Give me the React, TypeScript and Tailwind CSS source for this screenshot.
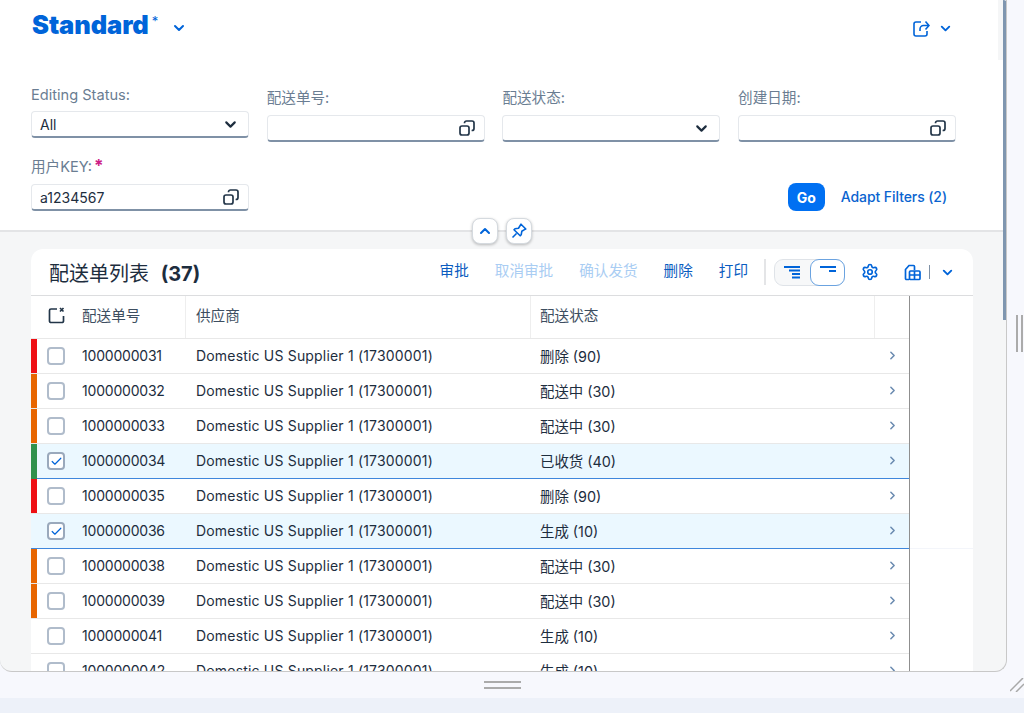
import { ChevronDown, ChevronRight, ChevronUp, Settings, Check } from "lucide-react";

const FONT = "font-['Inter','Noto_Sans_CJK_SC',sans-serif]";

type Row = {
  id: string;
  status: string;
  strip?: string;
  selected?: boolean;
};

const rows: Row[] = [
  { id: "1000000031", status: "删除 (90)", strip: "bg-[#ee0f14]" },
  { id: "1000000032", status: "配送中 (30)", strip: "bg-[#e76500]" },
  { id: "1000000033", status: "配送中 (30)", strip: "bg-[#e76500]" },
  { id: "1000000034", status: "已收货 (40)", strip: "bg-[#30914c]", selected: true },
  { id: "1000000035", status: "删除 (90)", strip: "bg-[#ee0f14]" },
  { id: "1000000036", status: "生成 (10)", selected: true },
  { id: "1000000038", status: "配送中 (30)", strip: "bg-[#e76500]" },
  { id: "1000000039", status: "配送中 (30)", strip: "bg-[#e76500]" },
  { id: "1000000041", status: "生成 (10)" },
  { id: "1000000042", status: "生成 (10)" },
];

function ValueHelpIcon() {
  return (
    <svg width="16" height="16" viewBox="0 0 16 16" fill="none" stroke="#223548" strokeWidth="1.7" className="shrink-0">
      <rect x="1" y="6" width="9" height="9" rx="2" />
      <path d="M5.5 3.2V3a2 2 0 0 1 2-2H13a2 2 0 0 1 2 2v5.500a2 2 0 0 1-2 2h-.4" />
    </svg>
  );
}

function Field({ value, select }: { value?: string; select?: boolean }) {
  return (
    <div className="flex h-[27px] w-[218px] items-center justify-between rounded-[4px] border border-[#e5e8ec] border-b-2 border-b-[#7f91a6] bg-white pl-2 pr-[9px] text-[14px] text-[#1d2d3e]">
      <span>{value}</span>
      {select ? <ChevronDown size={17} strokeWidth={3} color="#1d2d3e" /> : <ValueHelpIcon />}
    </div>
  );
}

function Label({ text, required }: { text: string; required?: boolean }) {
  return (
    <div className="flex h-[19px] items-start text-[14.6px] leading-[19px] text-[#6a7d92]">
      {text}:
      {required && <span className="ml-[2px] text-[17px] font-bold leading-[17px] text-[#cc1d86]">*</span>}
    </div>
  );
}

function ToolbarButton({ text, disabled }: { text: string; disabled?: boolean }) {
  return <span className={disabled ? "text-[14.6px] text-[#a9cdf3]" : "text-[14.6px] text-[#0a5cc0]"}>{text}</span>;
}

function SortIcon({ short }: { short?: boolean }) {
  return (
    <svg width="18" height="14" viewBox="0 0 18 14" fill="#0064d9">
      {short ? (
        <>
          <rect x="1" y="1" width="16" height="2" />
          <rect x="10" y="5" width="7" height="2" />
        </>
      ) : (
        <>
          <rect x="1" y="1" width="16" height="2" />
          <rect x="6" y="4.500" width="11" height="2" />
          <rect x="9" y="8" width="8" height="2" />
          <rect x="9" y="11.500" width="8" height="2" />
        </>
      )}
    </svg>
  );
}

function Checkbox({ checked }: { checked?: boolean }) {
  return (
    <div className={`flex h-[18px] w-[18px] items-center justify-center rounded-[4px] border-2 bg-white ${checked ? "border-[#9aa9bc]" : "border-[#b0bccb]"}`}>
      {checked && <Check size={13} strokeWidth={2.2} color="#0064d9" />}
    </div>
  );
}

function TableRow({ row }: { row: Row }) {
  return (
    <div
      className={`flex h-[35px] shrink-0 items-stretch border-b ${row.selected ? "border-b-[#3f87dc] bg-[#ebf8ff]" : "border-b-[#e8e8e8] bg-white"}`}
    >
      <div className={`w-[6px] shrink-0 ${row.strip ?? ""} ${row.selected ? "-mb-px" : ""}`} />
      <div className="flex w-[36px] shrink-0 items-center justify-center pl-[2px]">
        <Checkbox checked={row.selected} />
      </div>
      <div className="flex w-[113px] shrink-0 items-center pb-[1px] pl-[9px] tracking-[-0.2px]">{row.id}</div>
      <div className="flex w-[345px] shrink-0 items-center pb-[1px] pl-[10px] tracking-[0.18px]">Domestic US Supplier 1 (17300001)</div>
      <div className="flex w-[344px] shrink-0 items-center pl-[9px] pt-[2px] text-[14.4px]">{row.status}</div>
      <div className="flex flex-1 items-center justify-center pb-[1px]">
        <ChevronRight size={13} strokeWidth={2.8} color="#6b8bb0" />
      </div>
    </div>
  );
}

export default function App() {
  return (
    <div className={`flex h-[713px] w-[1024px] flex-col overflow-hidden bg-[#f7f8fd] ${FONT}`}>
      <div className="relative flex h-[672px] shrink-0">
        {/* main panel */}
        <div className="relative flex w-[1007px] flex-col overflow-hidden rounded-b-[12px] border-b border-r border-[#c8c8c8] bg-[#f5f6f7]">
          {/* filter bar */}
          <div className="relative h-[232px] shrink-0 border-b-2 border-[#e3e4e6] bg-white pl-[31px]">
            <div className="flex h-[50px] items-center pr-[53px]">
              <span className="ml-px pt-[1px] text-[25.5px] font-black tracking-[-0.1px] text-[#0064d9]">Standard</span>
              <span className="mb-[7px] ml-[3px] text-[13px] text-[#0064d9]">*</span>
              <ChevronDown size={16} strokeWidth={3} color="#0064d9" className="ml-[13px] mt-[6px]" />
              <div className="ml-auto flex items-center gap-[8px] pt-[6px]">
                <svg width="17" height="17" viewBox="0 0 17 17" fill="none" stroke="#0064d9" strokeWidth="1.600">
                  <path d="M8 2H3a2 2 0 0 0-2 2v10a2 2 0 0 0 2 2h9a2 2 0 0 0 2-2v-3" />
                  <path d="M7 11V9a3.500 3.500 0 0 1 3.500-3.500H16M12.500 1.500 16 5.500l-3.500 4" />
                </svg>
                <ChevronDown size={15} strokeWidth={3} color="#0064d9" />
              </div>
            </div>

            <div className="mt-[36px] flex gap-[17.7px]">
              <div>
                <Label text="Editing Status" required={false} />
                <div className="mt-[6px]">
                  <Field value="All" select />
                </div>
              </div>
              <div className="pt-[3px]">
                <Label text="配送单号" />
                <div className="mt-[7px]">
                  <Field />
                </div>
              </div>
              <div className="pt-[3px]">
                <Label text="配送状态" />
                <div className="mt-[7px]">
                  <Field select />
                </div>
              </div>
              <div className="pt-[3px]">
                <Label text="创建日期" />
                <div className="mt-[7px]">
                  <Field />
                </div>
              </div>
            </div>

            <div className="mt-[16px] flex items-end pr-[59px]">
              <div>
                <Label text="用户KEY" required />
                <div className="mt-[7px]">
                  <Field value="a1234567" />
                </div>
              </div>
              <button className="ml-auto flex h-[28px] w-[37px] items-center justify-center rounded-[8px] bg-[#0070f2] text-[14px] font-bold text-white">
                Go
              </button>
              <span className="mb-[4px] ml-[16px] text-[14px] font-medium leading-[20px] tracking-[-0.08px] text-[#0a64d0]">Adapt Filters (2)</span>
            </div>

            {/* top of the scrollbar track */}
            <div className="absolute right-0 top-0 h-[60px] w-[8px] bg-[#f5f6f7]" />
            <div className="absolute bottom-[-14px] left-[472px] z-10 flex gap-[8px]">
              <div className="flex h-[26px] w-[26px] items-center justify-center rounded-[8px] border border-[#d5dadf] bg-white shadow-[0_1px_3px_rgba(0,0,0,0.25)]">
                <ChevronUp size={16} strokeWidth={3} color="#0064d9" />
              </div>
              <div className="flex h-[26px] w-[26px] items-center justify-center rounded-[8px] border border-[#d5dadf] bg-white shadow-[0_1px_3px_rgba(0,0,0,0.25)]">
                <svg width="16" height="16" viewBox="0 0 16 16" fill="none" stroke="#0064d9" strokeWidth="1.600" strokeLinejoin="round">
                  <path d="M10 1.200 14.800 6l-1.300.6-2.700 1.700-.6 3.500-1 1L3 6.800l1-1 3.500-.6 1.700-2.700zM5.500 10.500 1.500 14.500" />
                </svg>
              </div>
            </div>
          </div>

          {/* table card */}
          <div className="flex min-h-0 flex-1 pl-[31px] pr-[33px] pt-[17px]">
            <div className="flex min-h-0 w-[942px] flex-col overflow-hidden rounded-t-[12px] bg-white">
              <div className="flex h-[47px] shrink-0 items-center border-b border-[#dcdddf] pl-[18px]">
                <span className="pt-[3px] text-[20px] text-[#1d2d3e]">
                  配送单列表 <span className="ml-[6px] font-bold">(37)</span>
                </span>
                <div className="ml-auto flex items-center">
                  <div className="flex items-center gap-[26px] pb-[1px] pl-[1px]">
                    <ToolbarButton text="审批" />
                    <ToolbarButton text="取消审批" disabled />
                    <ToolbarButton text="确认发货" disabled />
                    <ToolbarButton text="删除" />
                    <ToolbarButton text="打印" />
                  </div>
                  <div className="ml-[16px] h-[26px] w-[2px] bg-[#e4e5e7]" />
                  <div className="ml-[8px] flex h-[27px] w-[71px] rounded-[9px] border border-[#dfe3e8] bg-[#f7f8f9]">
                    <div className="flex w-[35px] items-center justify-center pr-[2px]">
                      <SortIcon />
                    </div>
                    <div className="-my-px -mr-px flex h-[27px] w-[35px] items-start justify-center rounded-[9px] border border-[#6ba3e0] bg-white pt-[5px]">
                      <SortIcon short />
                    </div>
                  </div>
                  <Settings size={18} strokeWidth={2.2} color="#0064d9" className="ml-[16px]" />
                  <svg width="17" height="17" viewBox="0 0 17 17" fill="none" stroke="#0064d9" strokeWidth="1.700" className="ml-[25px]">
                    <path d="M5 15.500H2.500a1 1 0 0 1-1-1V5.500L5 1.500h4.500a1 1 0 0 1 1 1V6" />
                    <rect x="5.500" y="7" width="10.500" height="8.500" rx="1" />
                    <path d="M5.500 11h10.500M10.500 7v8.500" />
                  </svg>
                  <div className="ml-[8px] h-[14px] w-px bg-[#7f91a6]" />
                  <ChevronDown size={15} strokeWidth={3} color="#0064d9" className="ml-[10px] mr-[18px]" />
                </div>
              </div>

              <div className="flex min-h-0 flex-1 items-start">
                <div className="flex h-full w-[879px] shrink-0 flex-col overflow-hidden border-r border-[#8f8f8f] text-[14px] text-[#1d2d3e]">
                  <div className="flex h-[43px] shrink-0 items-stretch border-b border-[#e8e8e8]">
                    <div className="flex w-[42px] shrink-0 items-center justify-center pb-[3px] pl-[8px]">
                      <svg width="17" height="17" viewBox="0 0 17 17" fill="none" stroke="#223548" strokeWidth="1.700">
                        <path d="M9 2H3a1.500 1.500 0 0 0-1.500 1.500V14A1.500 1.500 0 0 0 3 15.500h11a1.500 1.500 0 0 0 1.500-1.500V9" />
                        <path d="M12 1l3.500 3.500M15.500 1 12 4.500" />
                      </svg>
                    </div>
                    <div className="flex w-[113px] shrink-0 items-center border-r border-[#eeeeee] pl-[9px] text-[14.6px] text-[#3d4e60]">配送单号</div>
                    <div className="flex w-[345px] shrink-0 items-center border-r border-[#eeeeee] pl-[10px] text-[14.6px] text-[#3d4e60]">供应商</div>
                    <div className="flex w-[344px] shrink-0 items-center border-r border-[#eeeeee] pl-[9px] text-[14.6px] text-[#3d4e60]">配送状态</div>
                    <div className="flex-1" />
                  </div>
                  {rows.map((row) => (
                    <TableRow key={row.id} row={row} />
                  ))}
                </div>
                <div className="h-[253px] flex-1 border-b border-[#f3f5fa]" />
              </div>
            </div>
          </div>

          {/* scrollbar thumb */}
          <div className="absolute right-[-1px] top-0 h-[320px] w-[4px] rounded-tr-[4px] bg-[#7f96b0]" />
        </div>

        {/* vertical resize grip */}
        <div className="flex flex-1 items-start pl-[9px] pt-[315px]">
          <div className="h-[37px] w-[7px] border-x-2 border-[#ababab]" />
        </div>
      </div>

      {/* horizontal resize grip */}
      <div className="relative flex h-[26px] shrink-0 items-center pl-[484px]">
        <div className="h-[8px] w-[37px] border-y-2 border-[#ababab]" />
        <svg width="14" height="14" viewBox="0 0 14 14" className="absolute right-0 top-[6px]" stroke="#a8a8a8" strokeWidth="1.500">
          <path d="M0 13 13 0M6 14l8-8" />
        </svg>
      </div>
      <div className="flex-1 bg-[#edf1f9]" />
    </div>
  );
}
